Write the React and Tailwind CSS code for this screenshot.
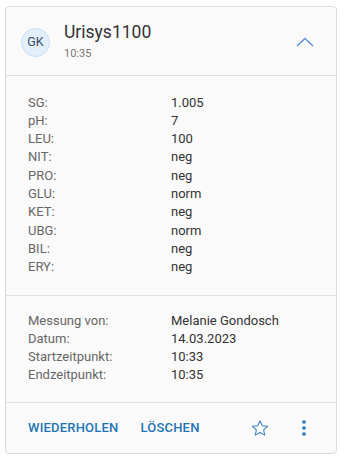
import React from 'react';

const results = [
  ['SG:', '1.005'],
  ['pH:', '7'],
  ['LEU:', '100'],
  ['NIT:', 'neg'],
  ['PRO:', 'neg'],
  ['GLU:', 'norm'],
  ['KET:', 'neg'],
  ['UBG:', 'norm'],
  ['BIL:', 'neg'],
  ['ERY:', 'neg'],
];

const meta = [
  ['Messung von:', 'Melanie Gondosch'],
  ['Datum:', '14.03.2023'],
  ['Startzeitpunkt:', '10:33'],
  ['Endzeitpunkt:', '10:35'],
];

const Rows = ({ items }) => (
  <div className="flex flex-col">
    {items.map(([k, v]) => (
      <div key={k} className="flex h-[18.3px] items-center text-[13px]">
        <span className="w-[143px] text-[#666]">{k}</span>
        <span className="text-[#333]">{v}</span>
      </div>
    ))}
  </div>
);

const App = () => {
  return (
    <div className="w-[345px] h-[461px] bg-white pt-[6px] pl-[5px]" style={{ fontFamily: 'Roboto, "Liberation Sans", sans-serif' }}>
      <div className="w-[332px] h-[448px] bg-[#fafafa] border border-[#dcdcdc] rounded-[4px] flex flex-col">
        <div className="flex items-center h-[71px] pl-[15px] pr-[22px] border-b border-[#e2e2e2]">
          <div className="w-[29px] h-[29px] rounded-full bg-[#e3effb] border border-[#c9def4] flex items-center justify-center text-[12.5px] text-[#3b4a6a] mt-[2px]">
            GK
          </div>
          <div className="ml-[14px] flex flex-col">
            <span className="text-[17.5px] leading-[22px] text-[#333]">Urisys1100</span>
            <span className="text-[11px] leading-[14px] text-[#777] mt-[4px]">10:35</span>
          </div>
          <svg className="ml-auto mt-[2px]" width="18" height="10" viewBox="0 0 18 10" fill="none">
            <path d="M1 9 L9 1.5 L17 9" stroke="#5b8fd6" strokeWidth="1.4" />
          </svg>
        </div>
        <div className="pl-[22px] pt-[17px] pb-[19px] border-b border-[#e2e2e2]">
          <Rows items={results} />
        </div>
        <div className="pl-[22px] pt-[15px] pb-[18px] border-b border-[#e2e2e2]">
          <Rows items={meta} />
        </div>
        <div className="flex items-center h-[51px] pl-[22px] pr-[30px]">
          <button className="text-[13px] font-medium text-[#1f74b5] tracking-[0.2px]">WIEDERHOLEN</button>
          <button className="ml-[22px] text-[13px] font-medium text-[#1f74b5] tracking-[0.2px]">LÖSCHEN</button>
          <svg className="ml-auto" width="20" height="19" viewBox="0 0 24 24" fill="none">
            <path d="M12 2.5 L14.9 8.6 L21.5 9.3 L16.6 13.8 L18 20.4 L12 17 L6 20.4 L7.4 13.8 L2.5 9.3 L9.1 8.6 Z" stroke="#3b7fc4" strokeWidth="1.3" strokeLinejoin="round" />
          </svg>
          <svg className="ml-[32px]" width="4" height="16" viewBox="0 0 4 16">
            <circle cx="2" cy="2" r="1.8" fill="#1f74b5" />
            <circle cx="2" cy="8" r="1.8" fill="#1f74b5" />
            <circle cx="2" cy="14" r="1.8" fill="#1f74b5" />
          </svg>
        </div>
      </div>
    </div>
  );
};

export default App;
